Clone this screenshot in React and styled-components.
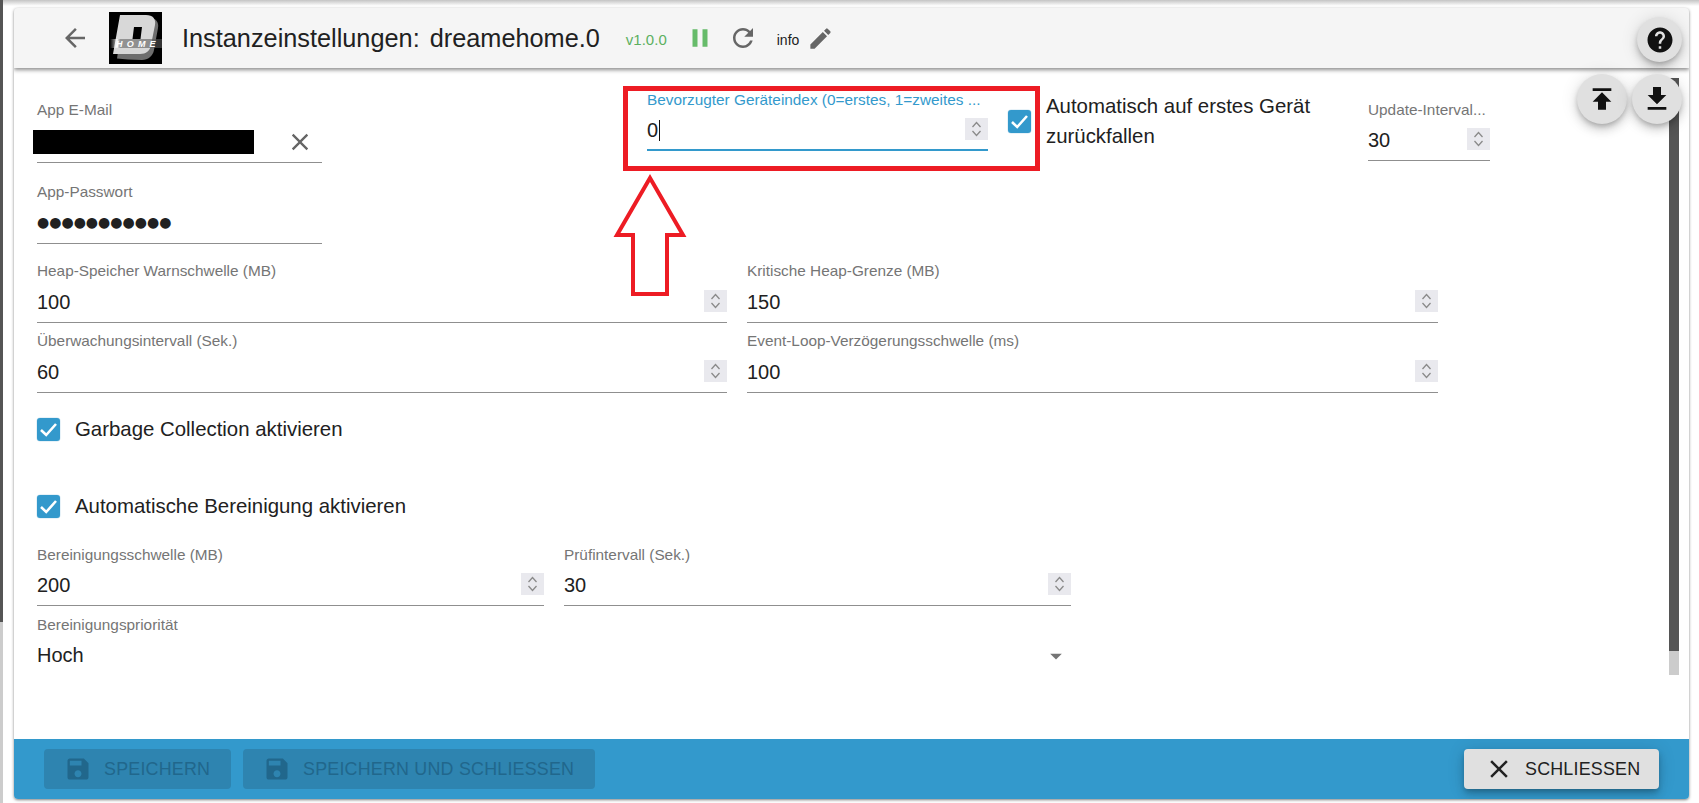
import React from "react";
import styled, { createGlobalStyle } from "styled-components";

const Global = createGlobalStyle`
  html, body { margin: 0; padding: 0; background: #fff; overflow: hidden; }
  body { font-family: "Liberation Sans", Arial, sans-serif; color: #212121; }
`;

const Page = styled.div`
  position: relative;
  width: 1699px;
  height: 803px;
  padding: 8px 10px 4px 14px;
  box-sizing: border-box;
  overflow: hidden;
  &::before {
    content: "";
    position: absolute;
    left: 0; top: 0; bottom: 0;
    width: 3px;
    z-index: 1;
    background: linear-gradient(#555 0, #555 622px, #ccc 622px);
  }
  &::after {
    content: "";
    position: absolute;
    left: 0; right: 0; top: 0;
    height: 6px;
    background: linear-gradient(#c4c4c4, #fff);
  }
`;

const Dialog = styled.div`
  position: relative;
  height: 100%;
  display: flex;
  flex-direction: column;
  border-radius: 4px;
  overflow: hidden;
  background: #fff;
  box-shadow: 0 1px 3px rgba(0,0,0,.5);
`;

const Header = styled.header`
  height: 60px;
  flex: none;
  display: flex;
  align-items: center;
  padding-left: 46px;
  background: #f5f5f5;
  box-shadow: 0 2px 4px rgba(0,0,0,.45);
  position: relative;
  z-index: 1;
`;

const HeadIcon = styled.svg`
  width: ${p => p.$size || 30}px;
  height: ${p => p.$size || 30}px;
  flex: none;
  fill: ${p => p.$color || "#666"};
  margin-left: ${p => p.$left || 0}px;
`;

const Logo = styled.svg`
  width: 53px;
  height: 52px;
  margin-left: 19px;
  flex: none;
`;

const Title = styled.h1`
  margin: 1px 0 0 20px;
  font-size: 25.3px;
  font-weight: 400;
  word-spacing: 3px;
  color: #212121;
  white-space: nowrap;
`;

const Version = styled.span`
  margin: 2px 0 0 26px;
  font-size: 15px;
  color: #5cb060;
`;

const Info = styled.span`
  margin: 3px 0 0 19px;
  font-size: 14px;
  color: #212121;
`;

const Fab = styled.button`
  position: absolute;
  display: flex;
  align-items: center;
  justify-content: center;
  padding: 0;
  border: 0;
  border-radius: 50%;
  background: #e0e0e0;
  width: ${p => p.$size}px;
  height: ${p => p.$size}px;
  left: ${p => p.$x}px;
  top: ${p => p.$y}px;
  z-index: 3;
  box-shadow: 0 3px 5px -1px rgba(0,0,0,.2), 0 6px 10px 0 rgba(0,0,0,.14), 0 1px 18px 0 rgba(0,0,0,.12);
  svg { width: ${p => p.$icon}px; height: ${p => p.$icon}px; fill: #111; }
`;

const Content = styled.main`
  flex: 1;
  position: relative;
  padding: 34px 0 0 23px;
  min-height: 0;
`;

const Scrollbar = styled.div`
  position: absolute;
  left: 1655px;
  top: 10px;
  width: 10px;
  height: 597px;
  background: linear-gradient(#555 0, #555 573px, #ccc 573px);
`;

const Row = styled.div`
  display: flex;
  align-items: flex-start;
  gap: ${p => p.$gap || 0}px;
  margin-top: ${p => p.$top || 0}px;
`;

const Column = styled.div`
  display: flex;
  flex-direction: column;
  width: ${p => p.$width}px;
  flex: none;
`;

const Field = styled.div`
  width: ${p => p.$width}px;
  flex: none;
  margin-top: ${p => p.$top || 0}px;
  margin-left: ${p => p.$left || 0}px;
`;

const Label = styled.div`
  height: 16px;
  line-height: 16px;
  font-size: 15.35px;
  color: ${p => (p.$focus ? "#3399cc" : "#757575")};
  white-space: nowrap;
`;

const Input = styled.div`
  display: flex;
  align-items: center;
  justify-content: space-between;
  box-sizing: border-box;
  height: ${p => p.$height || 44}px;
  padding-top: 3px;
  font-size: 20px;
  color: #212121;
  border-bottom: ${p => (p.$focus ? "2px solid #3399cc" : p.$plain ? "0" : "1px solid #8f8f8f")};
`;

const Value = styled.span`
  display: inline-flex;
  align-items: center;
`;

const Caret = styled.span`
  display: inline-block;
  width: 1px;
  height: 21px;
  margin-left: 1px;
  background: #111;
`;

const Dots = styled.span`
  font-size: 14px;
  font-family: "DejaVu Sans", sans-serif;
  margin: -2px 0 0 0;
  line-height: 1;
`;

const Redacted = styled.div`
  width: 221px;
  height: 24px;
  margin-left: -4px;
  background: #000;
`;

const ClearIcon = styled.svg`
  width: 28px;
  height: 28px;
  fill: #666;
  margin-right: 8px;
`;

const SpinBox = styled.span`
  display: flex;
  align-items: center;
  justify-content: center;
  width: 23px;
  height: 22px;
  margin-top: -3px;
  background: #e9e9ee;
  svg { width: 11px; height: 18px; fill: none; stroke: #8a8a8a; stroke-width: 1.3; }
`;

const CheckRow = styled.label`
  display: flex;
  align-items: center;
  gap: 15px;
  height: 24px;
  margin-top: ${p => p.$top}px;
  font-size: 20.4px;
  color: #212121;
`;

const CheckBox = styled.span`
  display: flex;
  align-items: center;
  justify-content: center;
  flex: none;
  width: 23px;
  height: 23px;
  margin-left: ${p => p.$left || 0}px;
  margin-top: ${p => p.$top || 0}px;
  border-radius: 3px;
  background: #3399cc;
  box-shadow: 0 0 0 .5px #cfe6f2;
  svg { width: 21px; height: 21px; fill: none; stroke: #fff; stroke-width: 2.6; }
`;

const AutoLabel = styled.div`
  width: 290px;
  flex: none;
  margin: -11px 0 0 15px;
  font-size: 20.4px;
  line-height: 30px;
  color: #212121;
`;

const Arrow = styled.svg`
  position: absolute;
  left: 612px;
  top: 172px;
  width: 76px;
  height: 126px;
  z-index: 2;
`;

const Highlight = styled.div`
  position: absolute;
  left: 623px;
  top: 86px;
  width: 417px;
  height: 85px;
  box-sizing: border-box;
  border: 5px solid #ed1c24;
  z-index: 2;
  pointer-events: none;
`;

const Footer = styled.footer`
  height: 60px;
  flex: none;
  display: flex;
  align-items: center;
  gap: 12px;
  padding: 0 30px 0 30px;
  background: #3399cc;
`;

const FootButton = styled.button`
  display: flex;
  align-items: center;
  height: 40px;
  box-sizing: border-box;
  padding: 0;
  width: ${p => p.$width}px;
  padding-left: ${p => p.$pad}px;
  border: 0;
  border-radius: 4px;
  font-family: inherit;
  font-size: 17.9px;
  letter-spacing: .2px;
  white-space: nowrap;
  color: #21678c;
  background: #2e84b0;
  svg { width: 28px; height: 28px; fill: currentColor; margin-right: 12px; flex: none; }
`;

const CloseButton = styled(FootButton)`
  margin-left: auto;
  color: #212121;
  background: #e0e0e0;
  box-shadow: 0 3px 5px -1px rgba(0,0,0,.2), 0 6px 10px 0 rgba(0,0,0,.14), 0 1px 18px 0 rgba(0,0,0,.12);
  svg { width: 30px; height: 30px; margin-right: 11px; }
`;

const SelectArrow = styled.svg`
  width: 28px;
  height: 28px;
  fill: #757575;
  margin-right: 1px;
`;

const P = {
  back: "M20 11H7.83l5.59-5.59L12 4l-8 8 8 8 1.41-1.41L7.83 13H20v-2z",
  pause: "M6 19h4V5H6v14zm8-14v14h4V5h-4z",
  refresh: "M17.65 6.35C16.2 4.9 14.21 4 12 4c-4.42 0-7.99 3.58-7.99 8s3.57 8 7.99 8c3.73 0 6.84-2.55 7.73-6h-2.08c-.82 2.33-3.04 4-5.65 4-3.31 0-6-2.69-6-6s2.69-6 6-6c1.66 0 3.14.69 4.22 1.78L13 11h7V4l-2.35 2.35z",
  edit: "M3 17.25V21h3.75L17.81 9.94l-3.75-3.75L3 17.25zM20.71 7.04c.39-.39.39-1.02 0-1.41l-2.34-2.34a.9959.9959 0 0 0-1.41 0l-1.83 1.83 3.75 3.75 1.83-1.83z",
  help: "M12 2C6.48 2 2 6.48 2 12s4.48 10 10 10 10-4.48 10-10S17.52 2 12 2zm1 17h-2v-2h2v2zm2.07-7.75l-.9.92C13.45 12.9 13 13.5 13 15h-2v-.5c0-1.1.45-2.1 1.17-2.83l1.24-1.26c.37-.36.59-.86.59-1.41 0-1.1-.9-2-2-2s-2 .9-2 2H8c0-2.21 1.79-4 4-4s4 1.79 4 4c0 .88-.36 1.68-.93 2.25z",
  up: "M5 4v2h14V4H5zm0 10h4v6h6v-6h4l-7-7-7 7z",
  down: "M19 9h-4V3H9v6H5l7 7 7-7zM5 18v2h14v-2H5z",
  close: "M19 6.41L17.59 5 12 10.59 6.41 5 5 6.41 10.59 12 5 17.59 6.41 19 12 13.41 17.59 19 19 17.59 13.41 12 19 6.41z",
  save: "M17 3H5c-1.11 0-2 .9-2 2v14c0 1.1.89 2 2 2h14c1.1 0 2-.9 2-2V7l-4-4zm-5 16c-1.66 0-3-1.34-3-3s1.34-3 3-3 3 1.34 3 3-1.34 3-3 3zm3-10H5V5h10v4z",
};

const Svg = ({ d }) => (
  <svg viewBox="0 0 24 24"><path d={d} /></svg>
);

const Spin = () => (
  <SpinBox>
    <svg viewBox="0 0 11 18">
      <path d="M1.5 7 5.5 2.5 9.5 7" />
      <path d="M1.5 11 5.5 15.5 9.5 11" />
    </svg>
  </SpinBox>
);

const Tick = () => (
  <svg viewBox="0 0 21 21"><path d="M3 11 8.2 16 18 5" /></svg>
);

const NumField = ({ label, value, width, top, left, height }) => (
  <Field $width={width} $top={top} $left={left}>
    <Label>{label}</Label>
    <Input $height={height}>
      <Value>{value}</Value>
      <Spin />
    </Input>
  </Field>
);

export default function App() {
  return (
    <Page>
      <Global />
      <Dialog>
        <Header>
          <HeadIcon viewBox="0 0 24 24"><path d={P.back} /></HeadIcon>
          <Logo viewBox="0 0 53 52">
            <defs>
              <linearGradient id="fade" x1="0" x2="1" y1="0" y2="0">
                <stop offset="0" stopColor="#fff" stopOpacity="0" />
                <stop offset=".14" stopColor="#fff" stopOpacity=".75" />
                <stop offset=".2" stopColor="#666" stopOpacity=".6" />
                <stop offset="1" stopColor="#555" stopOpacity=".6" />
              </linearGradient>
            </defs>
            <rect width="53" height="52" fill="#000" />
            <path d="M14 6h26c7 0 10 4 9 10l-4 22c-1 6-6 10-12 10l-14-.5-11-1z" fill="#6e6e6e" />
            <path d="M11 3h26c7 0 10 4 9 10l-4 20c-1 6-5 9-11 9H4z" fill="#d8d8d8" />
            <path d="M25 15h8l-1.5 12h-8z" fill="#000" />
            <rect x="1" y="27" width="52" height="9" fill="url(#fade)" />
            <text x="7" y="35" fill="#fff" fontSize="9" fontWeight="700" fontStyle="italic" fontFamily="Liberation Sans" letterSpacing="4.2">HOME</text>
          </Logo>
          <Title>Instanzeinstellungen: dreamehome.0</Title>
          <Version>v1.0.0</Version>
          <HeadIcon viewBox="0 0 24 24" $color="#66bb6a" $left={18}><path d={P.pause} /></HeadIcon>
          <HeadIcon viewBox="0 0 24 24" $left={13}><path d={P.refresh} /></HeadIcon>
          <Info>info</Info>
          <HeadIcon viewBox="0 0 24 24" $size={27} $left={8}><path d={P.edit} /></HeadIcon>
        </Header>
        <Fab $size={45} $icon={30} $x={1623} $y={9}><Svg d={P.help} /></Fab>
        <Fab $size={50} $icon={32} $x={1563} $y={66}><Svg d={P.up} /></Fab>
        <Fab $size={50} $icon={32} $x={1618} $y={66}><Svg d={P.down} /></Fab>
        <Content>
          <Scrollbar />
          <Row>
            <Column $width={285}>
              <Field $width={285}>
                <Label>App E-Mail</Label>
                <Input $height={45}>
                  <Redacted />
                  <ClearIcon viewBox="0 0 24 24"><path d={P.close} /></ClearIcon>
                </Input>
              </Field>
              <Field $width={285} $top={21}>
                <Label>App-Passwort</Label>
                <Input $height={44}>
                  <Dots>●●●●●●●●●●●</Dots>
                </Input>
              </Field>
            </Column>
            <Field $width={341} $top={-10} $left={325}>
              <Label $focus>Bevorzugter Geräteindex (0=erstes, 1=zweites ...</Label>
              <Input $focus $height={43}>
                <Value>0<Caret /></Value>
                <Spin />
              </Input>
            </Field>
            <CheckBox $left={20} $top={8}><Tick /></CheckBox>
            <AutoLabel>Automatisch auf erstes Gerät zurückfallen</AutoLabel>
            <NumField label="Update-Interval..." value="30" width={122} left={32} height={43} />
          </Row>
          <Row $top={19} $gap={20}>
            <NumField label="Heap-Speicher Warnschwelle (MB)" value="100" width={690} />
            <NumField label="Kritische Heap-Grenze (MB)" value="150" width={691} />
          </Row>
          <Row $top={10} $gap={20}>
            <NumField label="Überwachungsintervall (Sek.)" value="60" width={690} />
            <NumField label="Event-Loop-Verzögerungsschwelle (ms)" value="100" width={691} />
          </Row>
          <CheckRow $top={24}>
            <CheckBox><Tick /></CheckBox>
            Garbage Collection aktivieren
          </CheckRow>
          <CheckRow $top={53}>
            <CheckBox><Tick /></CheckBox>
            Automatische Bereinigung aktivieren
          </CheckRow>
          <Row $top={29} $gap={20}>
            <NumField label="Bereinigungsschwelle (MB)" value="200" width={507} height={43} />
            <NumField label="Prüfintervall (Sek.)" value="30" width={507} height={43} />
          </Row>
          <Field $width={1034} $top={11}>
            <Label>Bereinigungspriorität</Label>
            <Input $plain $height={42}>
              <Value>Hoch</Value>
              <SelectArrow viewBox="0 0 24 24"><path d="M7 10l5 5 5-5z" /></SelectArrow>
            </Input>
          </Field>
        </Content>
        <Footer>
          <FootButton $width={187} $pad={20} disabled><Svg d={P.save} />SPEICHERN</FootButton>
          <FootButton $width={352} $pad={20} disabled><Svg d={P.save} />SPEICHERN UND SCHLIESSEN</FootButton>
          <CloseButton $width={195} $pad={20}><Svg d={P.close} />SCHLIESSEN</CloseButton>
        </Footer>
      </Dialog>
      <Highlight />
      <Arrow viewBox="0 0 76 126">
        <path d="M38 6 L71 63 H55 V122 H21 V63 H5 Z" fill="#fff" stroke="#ed1c24" strokeWidth="4" />
      </Arrow>
    </Page>
  );
}
